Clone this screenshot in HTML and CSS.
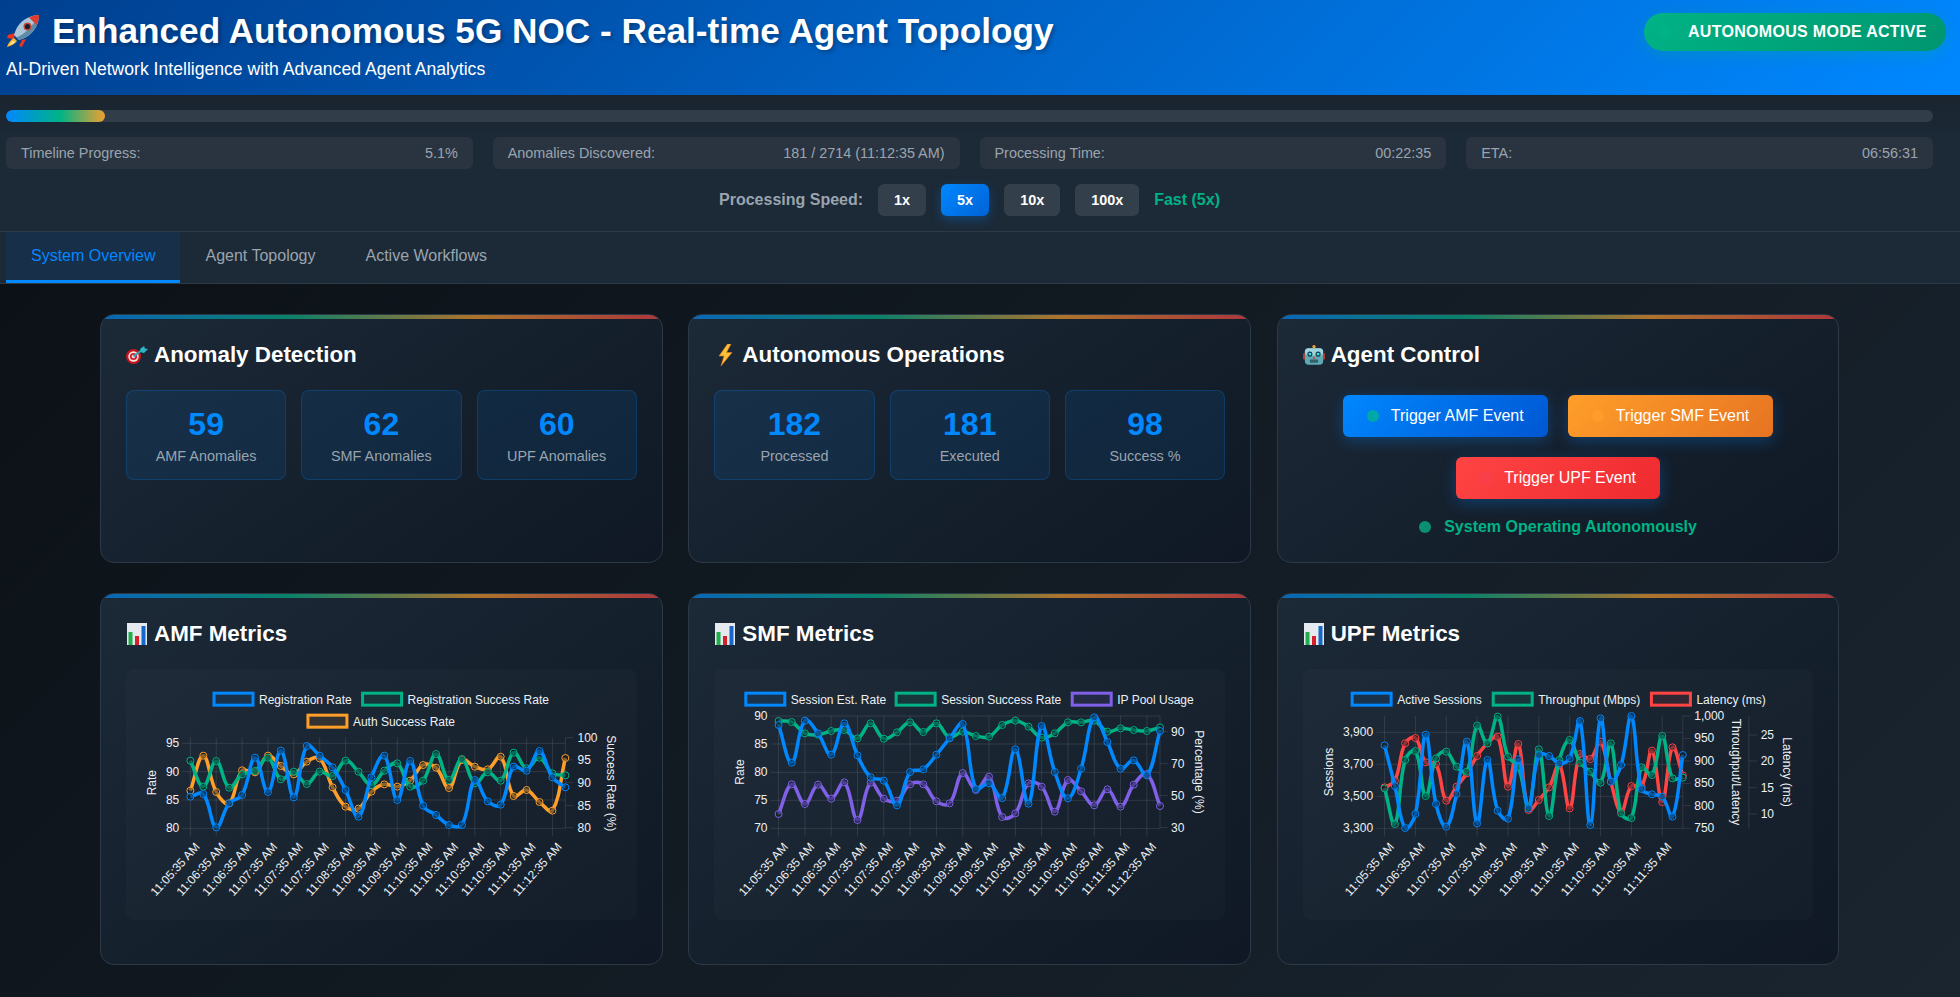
FILE: index.html
```html
<!DOCTYPE html>
<html lang="en">
<head>
    <meta charset="UTF-8">
    <meta name="viewport" content="width=device-width, initial-scale=1.0">
    <title>Enhanced Autonomous 5G NOC</title>
    <link rel="stylesheet" href="styles.css">
    <script src="charts.js" defer></script>
</head>
<body>
    <svg class="sprite" aria-hidden="true">
        <symbol id="icon-rocket" viewBox="0 0 34 34">
            <path d="M9 19 L2 21 L1 24 L8 25 Z" fill="#f0331f"/>
            <path d="M16 26 L13 32 L16 33 L20 25 Z" fill="#f0331f"/>
            <path d="M8 24 C4 26 2 30 1 33 C5 32 9 30 11 27 Z" fill="#ffb52e"/>
            <path d="M7 27 C5 29 4 30 4 31 C6 30 8 29 9 28 Z" fill="#fff1b8"/>
            <path d="M33 1 C25 1 17 5 12 12 C10 15 9 18 8 21 L13 26 C16 25 19 24 22 22 C29 17 33 9 33 1 Z" fill="#a9c6d8"/>
            <path d="M33 1 C33 9 29 17 22 22 C19 24 16 25 13 26 L10.500 23.500 C19 20 28 11 33 1 Z" fill="#5d8ba8"/>
            <path d="M33 1 C29 1 26 2 23 3.500 L30.500 11 C32 8 33 4 33 1 Z" fill="#e23a2c"/>
            <circle cx="21.500" cy="12.500" r="4" fill="#c9473a"/>
            <circle cx="21.500" cy="12.500" r="2.600" fill="#10222f"/>
        </symbol>
        <symbol id="icon-dart" viewBox="0 0 22 18">
            <circle cx="7.500" cy="10.500" r="7.500" fill="#c8161d"/>
            <circle cx="7.500" cy="10.500" r="5.200" fill="#f4e6e6"/>
            <circle cx="7.500" cy="10.500" r="3.600" fill="#d3202a"/>
            <circle cx="7.500" cy="10.500" r="1.800" fill="#f4e6e6"/>
            <path d="M7.500 10.500 L16 4" stroke="#2aa7b8" stroke-width="2"/>
            <path d="M14 3 L18 0 L19 2.500 L22 3 L18 7 L15.500 6.500 Z" fill="#2fb5c4"/>
        </symbol>
        <symbol id="icon-bolt" viewBox="0 0 22 22">
            <path d="M13.500 0 L5 12 L10 12 L7 22 L18 8.500 L12.500 8.500 L17 0 Z" fill="#fdc03a" stroke="#e8761a" stroke-width="0.600"/>
        </symbol>
        <symbol id="icon-robot" viewBox="0 0 24 22">
            <circle cx="12" cy="1.800" r="1.800" fill="#f2a33a"/>
            <rect x="0" y="9" width="3" height="7" rx="1" fill="#b5372f"/>
            <rect x="21" y="9" width="3" height="7" rx="1" fill="#b5372f"/>
            <rect x="2" y="3.500" width="20" height="18" rx="4" fill="#5fa8b4"/>
            <rect x="2" y="3.500" width="20" height="8" rx="4" fill="#9fd4da"/>
            <circle cx="7.500" cy="10" r="2.800" fill="#0f3f4c"/>
            <circle cx="16.500" cy="10" r="2.800" fill="#0f3f4c"/>
            <circle cx="7.500" cy="10" r="1.500" fill="#39e0ee"/>
            <circle cx="16.500" cy="10" r="1.500" fill="#39e0ee"/>
            <path d="M12 12 L13.500 15 L10.500 15 Z" fill="#d8403a"/>
            <rect x="7.500" y="16" width="9" height="3.500" rx="1" fill="#34606c"/>
        </symbol>
        <symbol id="icon-bars" viewBox="0 0 20 22">
            <rect width="20" height="22" fill="#e4eaee"/>
            <rect x="1.500" y="9" width="4" height="13" fill="#1fae4b"/>
            <rect x="8" y="13" width="4" height="9" fill="#d3202a"/>
            <rect x="14.500" y="3" width="4" height="19" fill="#1766c9"/>
        </symbol>
    </svg>

    <header class="top-header">
        <div class="header-text">
            <h1><svg class="rocket"><use href="#icon-rocket"/></svg>Enhanced Autonomous 5G NOC - Real-time Agent Topology</h1>
            <p>AI-Driven Network Intelligence with Advanced Agent Analytics</p>
        </div>
        <div class="mode-pill"><span class="pill-dot"></span>AUTONOMOUS MODE ACTIVE</div>
    </header>

    <section class="progress-section">
        <div class="progress-track"><div class="progress-fill"></div></div>
        <div class="stat-row">
            <div class="stat"><span>Timeline Progress:</span><span>5.1%</span></div>
            <div class="stat"><span>Anomalies Discovered:</span><span>181 / 2714 (11:12:35 AM)</span></div>
            <div class="stat"><span>Processing Time:</span><span>00:22:35</span></div>
            <div class="stat"><span>ETA:</span><span>06:56:31</span></div>
        </div>
        <div class="speed-row">
            <span class="speed-label">Processing Speed:</span>
            <button class="speed-btn">1x</button>
            <button class="speed-btn active">5x</button>
            <button class="speed-btn">10x</button>
            <button class="speed-btn">100x</button>
            <span class="speed-state">Fast (5x)</span>
        </div>
    </section>

    <nav class="tabs">
        <a class="tab active" href="#">System Overview</a>
        <a class="tab" href="#">Agent Topology</a>
        <a class="tab" href="#">Active Workflows</a>
    </nav>

    <main class="dashboard">
        <section class="card">
            <h3><svg class="card-icon"><use href="#icon-dart"/></svg>Anomaly Detection</h3>
            <div class="tiles">
                <div class="tile"><div class="tile-value">59</div><div class="tile-label">AMF Anomalies</div></div>
                <div class="tile"><div class="tile-value">62</div><div class="tile-label">SMF Anomalies</div></div>
                <div class="tile"><div class="tile-value">60</div><div class="tile-label">UPF Anomalies</div></div>
            </div>
        </section>
        <section class="card">
            <h3><svg class="card-icon"><use href="#icon-bolt"/></svg>Autonomous Operations</h3>
            <div class="tiles">
                <div class="tile"><div class="tile-value">182</div><div class="tile-label">Processed</div></div>
                <div class="tile"><div class="tile-value">181</div><div class="tile-label">Executed</div></div>
                <div class="tile"><div class="tile-value">98</div><div class="tile-label">Success %</div></div>
            </div>
        </section>
        <section class="card">
            <h3><svg class="card-icon"><use href="#icon-robot"/></svg>Agent Control</h3>
            <div class="controls">
                <button class="trigger amf"><span class="dot"></span>Trigger AMF Event</button>
                <button class="trigger smf"><span class="dot"></span>Trigger SMF Event</button>
                <button class="trigger upf"><span class="dot"></span>Trigger UPF Event</button>
            </div>
            <div class="auto-status"><span class="dot"></span>System Operating Autonomously</div>
        </section>

        <section class="card">
            <h3><svg class="card-icon"><use href="#icon-bars"/></svg>AMF Metrics</h3>
            <div class="chart-box"><svg id="amf-chart" class="chart"></svg></div>
        </section>
        <section class="card">
            <h3><svg class="card-icon"><use href="#icon-bars"/></svg>SMF Metrics</h3>
            <div class="chart-box"><svg id="smf-chart" class="chart"></svg></div>
        </section>
        <section class="card">
            <h3><svg class="card-icon"><use href="#icon-bars"/></svg>UPF Metrics</h3>
            <div class="chart-box"><svg id="upf-chart" class="chart"></svg></div>
        </section>
    </main>
</body>
</html>
```

FILE: styles.css
```css
* {
    box-sizing: border-box;
}
body {
    font-family: "Liberation Sans", Arial, sans-serif;
    background: linear-gradient(135deg, #0a0f14, #1a2530);
    color: #fff;
    margin: 0;
    height: 997px;
    overflow: hidden;
}
.sprite {
    display: none;
}
.top-header {
    height: 95px;
    background: linear-gradient(135deg, #003f8f, #0088ff);
    display: flex;
    justify-content: space-between;
    align-items: flex-start;
    padding: 11px 14px 0 6px;
}
.top-header h1 {
    margin: 0;
    font-size: 35.2px;
    line-height: 40px;
    display: flex;
    align-items: center;
    text-shadow: 2px 2px 4px rgba(0, 0, 0, 0.3);
}
.rocket {
    width: 34px;
    height: 34px;
    margin-right: 12px;
}
.top-header p {
    margin: 7px 0 0;
    font-size: 17.6px;
    line-height: 22px;
}
.mode-pill {
    margin-top: 2px;
    height: 38px;
    width: 302px;
    border-radius: 19px;
    background: linear-gradient(135deg, #00b386, #00966f);
    box-shadow: 0 4px 15px rgba(0, 179, 134, 0.3);
    display: flex;
    align-items: center;
    padding-left: 15px;
    font-size: 16px;
    font-weight: bold;
    letter-spacing: 0.3px;
}
.pill-dot {
    width: 12px;
    height: 12px;
    border-radius: 50%;
    background: #00b386;
    margin-right: 17px;
}
.progress-section {
    height: 136px;
    background: linear-gradient(#19242e, #1c2936 30%);
    padding: 15px 27px 0 6px;
}
.progress-track {
    height: 12px;
    background: #323d4a;
    border-radius: 6px;
    overflow: hidden;
}
.progress-fill {
    width: 5.15%;
    height: 100%;
    border-radius: 6px;
    background: linear-gradient(90deg, #0088ff, #00b386 55%, #f0a030);
}
.stat-row {
    display: grid;
    grid-template-columns: repeat(4, 1fr);
    gap: 20px;
    margin-top: 15px;
}
.stat {
    height: 32px;
    background: #2a3441;
    border-radius: 6px;
    padding: 0 15px;
    display: flex;
    justify-content: space-between;
    align-items: center;
    font-size: 14.4px;
    color: #9aa4af;
}
.speed-row {
    display: flex;
    justify-content: center;
    align-items: center;
    gap: 15px;
    margin-top: 15px;
    font-size: 16px;
    font-weight: bold;
}
.speed-label {
    color: #9aa4af;
}
.speed-btn {
    height: 32px;
    padding: 0 16px;
    border: none;
    border-radius: 6px;
    background: #343f4c;
    color: #fff;
    font-family: inherit;
    font-size: 14.4px;
    font-weight: bold;
}
.speed-btn.active {
    background: linear-gradient(135deg, #0088ff, #0062d6);
    box-shadow: 0 4px 12px rgba(0, 136, 255, 0.3);
}
.speed-state {
    color: #00b386;
}
.tabs {
    height: 53px;
    background: #1c2936;
    border-top: 1px solid #2f3a47;
    border-bottom: 1px solid #2f3a47;
    padding-left: 6px;
    display: flex;
}
.tab {
    padding: 0 25px;
    display: flex;
    align-items: center;
    border-bottom: 3px solid transparent;
    font-size: 16px;
    color: #9aa4af;
    text-decoration: none;
}
.tab.active {
    color: #0088ff;
    background: #182f4a;
    border-bottom-color: #0088ff;
}
.dashboard {
    display: grid;
    grid-template-columns: repeat(3, 1fr);
    grid-template-rows: 249px 372px;
    gap: 30px 25.5px;
    padding: 30px 120.5px 0 100px;
}
.card {
    position: relative;
    overflow: hidden;
    padding: 25px;
    border: 1px solid #2c3947;
    border-radius: 14px;
    background: linear-gradient(145deg, #1c2937, #0f1824);
}
.card::before {
    content: "";
    position: absolute;
    top: 0;
    left: 0;
    right: 0;
    height: 4px;
    opacity: 0.65;
    background: linear-gradient(90deg, #0088ff, #00b386, #ff9f2a, #ff4444);
}
.card h3 {
    margin: 0 0 20px;
    height: 30px;
    font-size: 22.4px;
    display: flex;
    align-items: center;
    gap: 6px;
}
.card-icon {
    width: 22px;
    height: 22px;
}
.tiles {
    display: grid;
    grid-template-columns: repeat(3, 1fr);
    gap: 15px;
}
.tile {
    height: 90px;
    border: 1px solid rgba(0, 136, 255, 0.22);
    border-radius: 8px;
    background: rgba(0, 136, 255, 0.1);
    text-align: center;
    padding-top: 15px;
}
.tile-value {
    font-size: 32px;
    line-height: 37px;
    font-weight: bold;
    color: #0088ff;
}
.tile-label {
    margin-top: 5px;
    font-size: 14.4px;
    line-height: 17px;
    color: #9aa4af;
}
.controls {
    display: flex;
    flex-wrap: wrap;
    justify-content: center;
    gap: 20px;
    margin-top: 25px;
}
.trigger {
    height: 42px;
    padding: 0 24px;
    border: none;
    border-radius: 6px;
    color: #fff;
    font-family: inherit;
    font-size: 16px;
    display: flex;
    align-items: center;
    box-shadow: 0 4px 15px rgba(0, 136, 255, 0.3);
}
.trigger .dot {
    width: 12px;
    height: 12px;
    border-radius: 50%;
    margin-right: 12px;
}
.trigger.amf {
    background: linear-gradient(135deg, #0088ff, #0056d2);
}
.trigger.amf .dot {
    background: #00a8a8;
}
.trigger.smf {
    background: linear-gradient(135deg, #ff9f2a, #e67322);
}
.trigger.smf .dot {
    background: #ff9d2a;
}
.trigger.upf {
    background: linear-gradient(135deg, #ff4444, #ee2a2e);
}
.trigger.upf .dot {
    background: #f8404a;
}
.auto-status {
    display: flex;
    justify-content: center;
    align-items: center;
    margin-top: 19px;
    font-size: 16px;
    font-weight: bold;
    color: #00b386;
}
.auto-status .dot {
    width: 12px;
    height: 12px;
    border-radius: 50%;
    background: #0a9070;
    margin-right: 13px;
}
.chart-box {
    height: 251px;
    border-radius: 8px;
    background: rgba(255, 255, 255, 0.02);
}
.chart {
    display: block;
    width: 100%;
    height: 100%;
    font-size: 12px;
    fill: #eef1f4;
}
.grid-line {
    stroke: rgba(255, 255, 255, 0.1);
    stroke-width: 1;
}
.series {
    fill: none;
    stroke-width: 3.5;
}
```

FILE: charts.js
```js
// y values were traced at 3x, x positions are at 2.8x, so everything goes through X() and Y()
const TIMES_A = ['05', '06', '06', '07', '07', '07', '08', '09', '09', '10', '10', '10', '10', '11', '12'];
const TIMES_B = ['05', '06', '07', '07', '08', '09', '10', '10', '10', '11'];

const BLUE = '#0088ff', GREEN = '#00b386', ORANGE = '#ff9f2a', PURPLE = '#8060e8', RED = '#ff4444';

const charts = [
    {
        id: 'amf-chart', ox: -26, left: 253, right: 1303, top: 443, bottom: 715, labelEvery: 2, times: TIMES_A,
        yTicks: [['95', 460], ['90', 545], ['85', 630], ['80', 715]], yLabelX: 222,
        yTitle: ['Rate', 145, 578],
        rightAxes: [{ line: 1303, labelX: 1337, ticks: [['100', 443], ['95', 510], ['90', 578], ['85', 647], ['80', 713]], title: ['Success Rate (%)', 1430, 580] }],
        legend: [
            [BLUE, 'Registration Rate', 315, 305], [GREEN, 'Registration Success Rate', 731, 305],
            [ORANGE, 'Auth Success Rate', 578, 371]
        ],
        series: [
            [ORANGE, [602, 497, 606, 640, 541, 547, 497, 528, 553, 515, 505, 592, 650, 656, 605, 583, 590, 572, 525, 533, 594, 510, 530, 538, 500, 618, 600, 636, 662, 504]],
            [GREEN, [512, 590, 513, 593, 553, 543, 503, 568, 545, 582, 545, 558, 512, 545, 585, 542, 520, 590, 572, 492, 570, 507, 580, 547, 572, 488, 535, 503, 550, 556]],
            [BLUE, [620, 612, 712, 640, 615, 503, 606, 482, 622, 468, 497, 532, 600, 680, 562, 497, 630, 513, 647, 675, 705, 705, 570, 634, 644, 530, 542, 483, 562, 592]]
        ]
    },
    {
        id: 'smf-chart', ox: -24, left: 248, right: 1316, top: 378, bottom: 715, labelEvery: 2, times: TIMES_A,
        yTicks: [['90', 378], ['85', 462], ['80', 547], ['75', 631], ['70', 715]], yLabelX: 217,
        yTitle: ['Rate', 140, 546],
        rightAxes: [{ line: 1316, labelX: 1347, ticks: [['90', 425], ['70', 521], ['50', 617], ['30', 713]], title: ['Percentage (%)', 1425, 546] }],
        legend: [
            [BLUE, 'Session Est. Rate', 152, 305], [GREEN, 'Session Success Rate', 573, 305], [PURPLE, 'IP Pool Usage', 1066, 305]
        ],
        series: [
            [PURPLE, [672, 583, 642, 584, 626, 577, 690, 578, 626, 632, 583, 583, 634, 640, 549, 600, 560, 681, 670, 580, 590, 665, 570, 604, 646, 598, 650, 584, 552, 648]],
            [GREEN, [393, 396, 430, 434, 423, 420, 445, 400, 446, 427, 397, 426, 400, 442, 425, 438, 440, 405, 392, 410, 443, 430, 397, 397, 392, 425, 415, 420, 423, 412]],
            [BLUE, [405, 518, 392, 430, 494, 400, 496, 562, 572, 646, 546, 538, 494, 445, 402, 597, 580, 624, 478, 641, 408, 546, 625, 536, 382, 456, 536, 511, 556, 423]]
        ]
    },
    {
        id: 'upf-chart', ox: -22, left: 290, right: 1125, top: 378, bottom: 715, labelEvery: 3, times: TIMES_B,
        yTicks: [['3,900', 427], ['3,700', 523], ['3,500', 619], ['3,300', 715]], yLabelX: 258,
        yTitle: ['Sessions', 133, 546],
        rightAxes: [
            { line: 1125, labelX: 1157, ticks: [['1,000', 378], ['950', 445], ['900', 513], ['850', 580], ['800', 647], ['750', 715]], title: ['Throughput/Latency', 1275, 546] },
            { line: 1310, labelX: 1343, ticks: [['25', 435], ['20', 513], ['15', 593], ['10', 672]], title: ['Latency (ms)', 1418, 546] }
        ],
        legend: [
            [BLUE, 'Active Sessions', 195, 305], [GREEN, 'Throughput (Mbps)', 590, 305], [RED, 'Latency (ms)', 1033, 305]
        ],
        series: [
            [RED, [592, 572, 460, 444, 517, 522, 632, 590, 550, 498, 460, 440, 590, 462, 660, 630, 592, 525, 655, 492, 507, 455, 575, 665, 588, 590, 482, 636, 472, 556]],
            [GREEN, [595, 702, 510, 483, 618, 505, 485, 530, 545, 407, 460, 380, 500, 530, 650, 478, 678, 510, 450, 518, 545, 578, 460, 670, 684, 532, 555, 438, 565, 563]],
            [BLUE, [466, 588, 714, 672, 434, 642, 710, 612, 455, 700, 510, 662, 686, 508, 655, 495, 498, 520, 505, 393, 705, 385, 575, 525, 378, 597, 613, 620, 680, 495]]
        ]
    }
];

const NS = 'http://www.w3.org/2000/svg';

function el(parent, name, attrs, text) {
    const node = document.createElementNS(NS, name);
    for (const key in attrs) node.setAttribute(key, attrs[key]);
    if (text) node.textContent = text;
    parent.appendChild(node);
    return node;
}

// same spline chart.js uses for tension 0.4
function splinePath(points) {
    const t = 0.4;
    const ctrl = points.map((p, i) => {
        const prev = points[i - 1] || p, next = points[i + 1] || p;
        const d01 = Math.hypot(p[0] - prev[0], p[1] - prev[1]);
        const d12 = Math.hypot(next[0] - p[0], next[1] - p[1]);
        const sum = d01 + d12 || 1;
        const fa = t * d01 / sum, fb = t * d12 / sum;
        return {
            inX: p[0] - fa * (next[0] - prev[0]), inY: p[1] - fa * (next[1] - prev[1]),
            outX: p[0] + fb * (next[0] - prev[0]), outY: p[1] + fb * (next[1] - prev[1])
        };
    });
    let d = `M${points[0][0]} ${points[0][1]}`;
    for (let i = 1; i < points.length; i++) {
        d += ` C${ctrl[i - 1].outX} ${ctrl[i - 1].outY} ${ctrl[i].inX} ${ctrl[i].inY} ${points[i][0]} ${points[i][1]}`;
    }
    return d;
}

function drawChart(c) {
    const svg = document.getElementById(c.id);
    const X = z => c.ox + z / 2.8;
    const Y = z => z / 3 - 79;
    const step = (c.right - c.left) / 29;

    // grid
    c.yTicks.forEach(t => {
        el(svg, 'line', { class: 'grid-line', x1: X(c.left) - 8, x2: X(c.right), y1: Y(t[1]), y2: Y(t[1]) });
        el(svg, 'text', { x: X(c.yLabelX), y: Y(t[1]) + 4, 'text-anchor': 'end' }, t[0]);
    });
    c.times.forEach((time, i) => {
        const x = X(c.left + i * c.labelEvery * step);
        el(svg, 'line', { class: 'grid-line', x1: x, x2: x, y1: Y(c.top), y2: Y(c.bottom) + 8 });
        el(svg, 'text', {
            transform: `translate(${x + 10} ${Y(c.bottom) + 19}) rotate(-48)`, 'text-anchor': 'end'
        }, `11:${time}:35 AM`);
    });

    // axis titles
    el(svg, 'text', {
        transform: `translate(${X(c.yTitle[1]) + 4} ${Y(c.yTitle[2])}) rotate(-90)`, 'text-anchor': 'middle'
    }, c.yTitle[0]);
    c.rightAxes.forEach(a => {
        el(svg, 'line', { class: 'grid-line', x1: X(a.line), x2: X(a.line), y1: Y(c.top), y2: Y(c.bottom) });
        a.ticks.forEach(t => {
            el(svg, 'line', { class: 'grid-line', x1: X(a.line), x2: X(a.line) + 8, y1: Y(t[1]), y2: Y(t[1]) });
            el(svg, 'text', { x: X(a.labelX), y: Y(t[1]) + 4 }, t[0]);
        });
        el(svg, 'text', {
            transform: `translate(${X(a.title[1]) - 4} ${Y(a.title[2])}) rotate(90)`, 'text-anchor': 'middle'
        }, a.title[0]);
    });

    // legend
    c.legend.forEach(item => {
        const x = X(item[2]) + 1.5, y = Y(item[3]) + 1.5;
        el(svg, 'rect', { x, y, width: 39, height: 12, fill: item[0], 'fill-opacity': 0.1, stroke: item[0], 'stroke-width': 3 });
        el(svg, 'text', { x: x + 45, y: y + 10.5 }, item[1]);
    });

    // lines, last one in the list ends up on top
    c.series.forEach(s => {
        const points = s[1].map((z, i) => [X(c.left + i * step), Y(z)]);
        el(svg, 'path', { class: 'series', d: splinePath(points), stroke: s[0] });
        points.forEach(p => {
            el(svg, 'circle', { cx: p[0], cy: p[1], r: 3.5, fill: '#0b1a26', 'fill-opacity': 0.45, stroke: s[0], 'stroke-width': 1 });
        });
    });
}

charts.forEach(drawChart);
```
